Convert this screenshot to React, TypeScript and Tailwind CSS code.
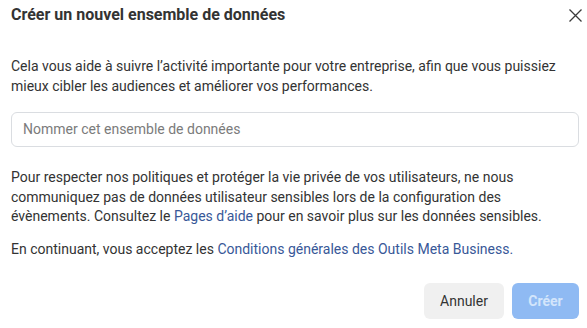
import React from 'react';

const font = { fontFamily: 'Roboto, "Noto Sans", sans-serif' };

export default function App() {
  return (
    <div className="w-[587px] h-[328px] bg-white overflow-hidden pl-[11px] pr-[8px] flex flex-col" style={font}>
      <header className="flex items-start justify-between pt-[3px]">
        <h1 className="text-[16px] leading-[24px] font-bold text-[#333333]">Créer un nouvel ensemble de données</h1>
        <button className="mt-[5px] mr-[-3px] w-[14px] h-[14px] flex items-center justify-center text-[#3a3a3a]">
          <svg width="13" height="13" viewBox="0 0 13 13" fill="none" stroke="currentColor" strokeWidth="1.3">
            <path d="M0.5 0.5 L12.5 12.5 M12.5 0.5 L0.5 12.5" />
          </svg>
        </button>
      </header>

      <p className="mt-[30px] text-[14px] leading-[19.5px] text-[#333333]">
        Cela vous aide à suivre l’activité importante pour votre entreprise, afin que vous puissiez mieux cibler les audiences et améliorer vos performances.
      </p>

      <div className="mt-[16px] h-[35px] w-full rounded-[6px] border border-[#dadde1] flex items-center px-[11px]">
        <span className="text-[14px] text-[#7b7b7b]">Nommer cet ensemble de données</span>
      </div>

      <p className="mt-[21px] text-[14px] leading-[19.5px] text-[#333333]">
        Pour respecter nos politiques et protéger la vie privée de vos utilisateurs, ne nous communiquez pas de données utilisateur sensibles lors de la configuration des évènements. Consultez le <span className="text-[#385898]">Pages d’aide</span> pour en savoir plus sur les données sensibles.
      </p>

      <p className="mt-[13px] text-[14px] leading-[19.5px] text-[#333333]">
        En continuant, vous acceptez les <span className="text-[#385898]">Conditions générales des Outils Meta Business.</span>
      </p>

      <div className="mt-[24px] flex justify-end gap-[8px]">
        <button className="w-[80px] h-[36px] rounded-[6px] bg-[#f0f0f0] text-[14px] text-[#333333]">Annuler</button>
        <button className="w-[67px] h-[36px] rounded-[6px] bg-[#8fbaf3] text-[14px] font-bold text-[#d3e5fb]">Créer</button>
      </div>
    </div>
  );
}
